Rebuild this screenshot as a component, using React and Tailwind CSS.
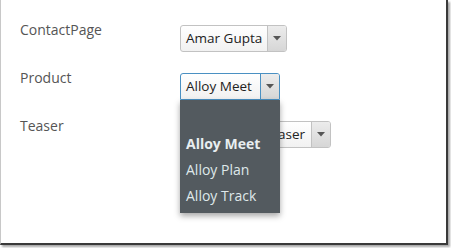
import React from 'react';

const font = { fontFamily: '"Open Sans", "DejaVu Sans", sans-serif' };

function Arrow() {
  return (
    <svg width="8" height="5" viewBox="0 0 8 5" className="block">
      <path d="M0 0 L8 0 L4 4.5 Z" fill="#555" />
    </svg>
  );
}

function Select({ value, focused, width, textClass = 'pl-[5px]', children }) {
  return (
    <div className="relative self-start">
      <div
        className={
          'flex h-[27px] items-stretch border bg-gradient-to-b from-white to-[#f1f1f1] ' +
          (focused ? 'border-[#4a90c2] rounded-t-[3px]' : 'border-[#c2c2c2] rounded-[3px]')
        }
        style={{ width }}
      >
        <div className={'flex flex-1 items-center text-[13.5px] text-[#222] whitespace-nowrap overflow-hidden ' + textClass}>
          {value}
        </div>
        <div
          className={
            'flex w-[19px] items-center justify-center border-l bg-gradient-to-b from-[#ececec] to-[#d6d6d6] ' +
            (focused ? 'border-[#4a90c2] rounded-tr-[2px]' : 'border-[#c2c2c2] rounded-r-[2px]')
          }
        >
          <Arrow />
        </div>
      </div>
      {children}
    </div>
  );
}

export default function App() {
  return (
    <div className="w-[451px] h-[248px] bg-white" style={font}>
      <div className="relative w-[448px] h-[245px] bg-white border-l border-[#c8c8c8] border-r-2 border-b-2 border-r-[#3a3a3a] border-b-[#3a3a3a] shadow-[2px_2px_2px_rgba(0,0,0,0.35)]">
        <div className="flex flex-col gap-[21px] pt-[25px]">
          <div className="flex">
            <div className="w-[179px] pl-[19px] -mt-[5px] text-[14px] leading-[19px] text-[#555]">ContactPage</div>
            <Select value="Amar Gupta" width={107} />
          </div>
          <div className="flex relative z-10">
            <div className="w-[179px] pl-[19px] -mt-[5px] text-[14px] leading-[19px] text-[#555]">Product</div>
            <Select value="Alloy Meet" focused width={100}>
              <div className="absolute left-0 top-full w-[100px] h-[113px] bg-[#535a5f] pt-[31px] shadow-[0_3px_6px_rgba(0,0,0,0.35)]">
                <div className="h-[26px] leading-[26px] pl-[6px] text-[14px] font-bold text-[#e8eef0]">Alloy Meet</div>
                <div className="h-[26px] leading-[26px] pl-[6px] text-[14px] text-[#dfe8ea]">Alloy Plan</div>
                <div className="h-[26px] leading-[26px] pl-[6px] text-[14px] text-[#dfe8ea]">Alloy Track</div>
              </div>
            </Select>
          </div>
          <div className="flex">
            <div className="w-[179px] pl-[19px] -mt-[5px] text-[14px] leading-[19px] text-[#555]">Teaser</div>
            <Select value="Alloy Meet Teaser" width={151} textClass="justify-end pr-[6px]" />
          </div>
        </div>
      </div>
    </div>
  );
}
